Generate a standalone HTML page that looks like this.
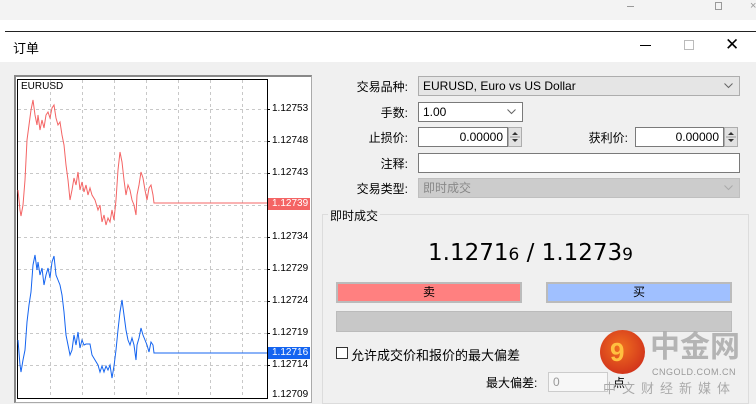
<!DOCTYPE html>
<html><head><meta charset="utf-8"><style>
*{margin:0;padding:0;box-sizing:border-box}
body{width:756px;height:403px;overflow:hidden;background:#f0f0f0;font-family:"Liberation Sans","Noto Sans CJK SC",sans-serif;font-size:12px;color:#000;position:relative}
.a{position:absolute}
.lbl{position:absolute;text-align:right;width:100px;font-size:12px}
.fld{position:absolute;background:#fff;border:1px solid #7a7a7a;height:20px;font-size:12px;padding:2px 4px;line-height:14px}
.ax{position:absolute;left:272px;font-size:10px;line-height:10px}
.spin{position:absolute;width:14px;height:20px;border:1px solid #adadad;background:#e1e1e1}
.chev{position:absolute;right:6px;top:6px}
</style></head><body>
<div class="a" style="left:0;top:0;width:756px;height:20px;background:#f3f3f3"></div>
<div class="a" style="left:627px;top:6px;width:7px;height:1px;background:#999"></div>
<div class="a" style="left:715px;top:2px;width:7px;height:8px;border:1px solid #999"></div>
<div class="a" style="left:750px;top:0px;color:#999;font-size:11px">×</div>
<div class="a" style="left:0;top:20px;width:756px;height:42px;background:#fff"></div>
<div class="a" style="left:5px;top:31px;width:751px;height:1px;background:#222"></div>
<div class="a" style="left:13px;top:38px;font-size:13px">订单</div>
<div class="a" style="left:640px;top:45px;width:11px;height:1px;background:#000"></div>
<div class="a" style="left:684px;top:40px;width:10px;height:10px;border:1px solid #bbb"></div>
<div class="a" style="left:725px;top:35px;font-size:17px;line-height:20px">✕</div>

<div class="a" style="left:14px;top:75px;width:298px;height:328px;border:1px solid #aaa;border-left:2px solid #888;border-top:2px solid #888;background:#fff"></div>
<svg class="a" style="left:0;top:0" width="320" height="403">
<g stroke="#c8c8c8" stroke-dasharray="3,3" stroke-width="1">
<line x1="50.5" y1="80" x2="50.5" y2="398"/><line x1="82.5" y1="80" x2="82.5" y2="398"/><line x1="114.5" y1="80" x2="114.5" y2="398"/><line x1="146.5" y1="80" x2="146.5" y2="398"/><line x1="178.5" y1="80" x2="178.5" y2="398"/><line x1="210.5" y1="80" x2="210.5" y2="398"/><line x1="242.5" y1="80" x2="242.5" y2="398"/>
<line x1="18" y1="109.5" x2="267" y2="109.5"/><line x1="18" y1="141.5" x2="267" y2="141.5"/><line x1="18" y1="173.5" x2="267" y2="173.5"/><line x1="18" y1="205.5" x2="267" y2="205.5"/><line x1="18" y1="237.5" x2="267" y2="237.5"/><line x1="18" y1="269.5" x2="267" y2="269.5"/><line x1="18" y1="301.5" x2="267" y2="301.5"/><line x1="18" y1="333.5" x2="267" y2="333.5"/><line x1="18" y1="365.5" x2="267" y2="365.5"/>
</g>
<rect x="17.5" y="79.5" width="250" height="319" fill="none" stroke="#000"/>
<g stroke="#000"><line x1="267" y1="109.5" x2="270" y2="109.5"/><line x1="267" y1="141.5" x2="270" y2="141.5"/><line x1="267" y1="173.5" x2="270" y2="173.5"/><line x1="267" y1="237.5" x2="270" y2="237.5"/><line x1="267" y1="269.5" x2="270" y2="269.5"/><line x1="267" y1="301.5" x2="270" y2="301.5"/><line x1="267" y1="333.5" x2="270" y2="333.5"/><line x1="267" y1="365.5" x2="270" y2="365.5"/></g>
<polyline fill="none" stroke="#f46464" stroke-width="1" points="18,190 20,210 21,216 23,205 25,180 27,140 29,125 31,110 33,100 35,115 37,125 38,115 40,130 42,120 44,128 46,115 48,112 50,118 52,108 54,105 56,118 58,125 60,122 62,135 64,145 66,165 68,180 70,200 72,190 74,178 76,185 78,172 80,190 82,182 84,192 86,185 88,195 90,188 92,195 95,200 98,210 100,205 102,222 104,215 106,225 108,218 110,222 112,210 114,220 116,200 118,170 120,152 122,162 124,180 126,195 128,185 130,190 132,200 134,205 136,215 137,195 139,185 141,172 143,178 145,190 147,200 149,188 151,185 153,195 154,203 267,203"/>
<polyline fill="none" stroke="#1464f0" stroke-width="1" points="18,340 20,365 21,372 23,360 25,350 27,322 29,305 31,292 33,265 35,255 37,270 38,262 40,275 42,268 44,285 46,275 48,268 50,278 52,262 54,256 56,275 58,280 60,285 62,295 64,312 66,335 68,345 70,355 72,350 74,335 76,345 78,332 80,348 82,340 84,345 86,344 90,344 92,355 95,360 98,365 100,372 102,366 104,372 106,366 108,370 110,365 112,378 114,366 116,350 118,330 120,312 122,300 124,315 126,330 128,340 130,345 132,338 134,345 136,360 137,345 139,338 141,328 143,335 145,340 147,345 149,352 151,342 153,345 154,353 267,353"/>
<rect x="268" y="198" width="42" height="12" fill="#f46464"/>
<rect x="268" y="347" width="42" height="12" fill="#1464f0"/>
</svg>
<div class="a" style="left:21px;top:81px;font-size:10px">EURUSD</div>
<div class="ax" style="top:104px">1.12753</div>
<div class="ax" style="top:136px">1.12748</div>
<div class="ax" style="top:168px">1.12743</div>
<div class="ax" style="top:199px;color:#fff">1.12739</div>
<div class="ax" style="top:232px">1.12734</div>
<div class="ax" style="top:264px">1.12729</div>
<div class="ax" style="top:296px">1.12724</div>
<div class="ax" style="top:328px">1.12719</div>
<div class="ax" style="top:348px;color:#fff">1.12716</div>
<div class="ax" style="top:360px">1.12714</div>
<div class="ax" style="top:390px">1.12709</div>

<div class="lbl" style="left:308px;top:78px">交易品种:</div>
<div class="fld" style="left:418px;top:76px;width:322px;background:#e5e5e5;border-color:#adadad">EURUSD, Euro vs US Dollar<svg class="chev" width="9" height="6"><polyline points="0.5,0.5 4.5,4.5 8.5,0.5" fill="none" stroke="#666"/></svg></div>
<div class="lbl" style="left:308px;top:104px">手数:</div>
<div class="fld" style="left:418px;top:102px;width:105px">1.00<svg class="chev" width="9" height="6"><polyline points="0.5,0.5 4.5,4.5 8.5,0.5" fill="none" stroke="#666"/></svg></div>
<div class="lbl" style="left:308px;top:129px">止损价:</div>
<div class="fld" style="left:418px;top:127px;width:90px;text-align:right">0.00000</div>
<div class="spin" style="left:508px;top:127px"><svg width="12" height="18"><path d="M3,7 L6,4 L9,7Z M3,11 L6,14 L9,11Z" fill="#333"/><line x1="1" y1="9" x2="11" y2="9" stroke="#999"/></svg></div>
<div class="lbl" style="left:528px;top:129px">获利价:</div>
<div class="fld" style="left:635px;top:127px;width:89px;text-align:right">0.00000</div>
<div class="spin" style="left:724px;top:127px"><svg width="12" height="18"><path d="M3,7 L6,4 L9,7Z M3,11 L6,14 L9,11Z" fill="#333"/><line x1="1" y1="9" x2="11" y2="9" stroke="#999"/></svg></div>
<div class="lbl" style="left:308px;top:155px">注释:</div>
<div class="fld" style="left:418px;top:153px;width:322px"></div>
<div class="lbl" style="left:308px;top:180px">交易类型:</div>
<div class="fld" style="left:418px;top:178px;width:322px;background:#ccc;border-color:#bfbfbf;color:#888">即时成交<svg class="chev" width="9" height="6"><polyline points="0.5,0.5 4.5,4.5 8.5,0.5" fill="none" stroke="#aaa"/></svg></div>

<div class="a" style="left:322px;top:214px;width:427px;height:190px;border:1px solid #dcdcdc"></div>
<div class="a" style="left:328px;top:207px;background:#f0f0f0;padding:0 2px;font-size:12px">即时成交</div>
<div class="a" style="left:428px;top:240px;font-size:23px;font-family:'DejaVu Sans',sans-serif">1.1271<span style="font-size:17px">6</span> / 1.1273<span style="font-size:17px">9</span></div>
<div class="a" style="left:336px;top:282px;width:186px;height:21px;background:#ff8080;border:2px solid #bbb;text-align:center;line-height:16px">卖</div>
<div class="a" style="left:546px;top:282px;width:186px;height:21px;background:#a0c0ff;border:2px solid #bbb;text-align:center;line-height:16px">买</div>
<div class="a" style="left:336px;top:311px;width:396px;height:21px;background:#c8c8c8;border:1px solid #bbb"></div>
<div class="a" style="left:336px;top:347px;width:12px;height:12px;border:1px solid #333;background:#fff"></div>
<div class="a" style="left:351px;top:345px;font-size:13px">允许成交价和报价的最大偏差</div>
<div class="a" style="left:486px;top:374px;font-size:12px">最大偏差:</div>
<div class="a" style="left:548px;top:372px;width:60px;height:20px;border:1px solid #ccc;background:#f7f7f7;color:#999;padding:2px 4px">0</div>
<div class="a" style="left:613px;top:374px">点</div>

<div class="a" style="left:600px;top:330px;width:45px;height:44px;border-radius:50%;background:radial-gradient(circle at 45% 40%,#f07020,#c8201a)"></div>
<div class="a" style="left:610px;top:338px;font-size:26px;line-height:28px;color:#ffc040;font-weight:bold">9</div>
<div class="a" style="left:650px;top:330px;font-size:30px;line-height:36px;color:#aaa;font-weight:bold;opacity:.85">中金网</div>
<div class="a" style="left:652px;top:367px;font-size:9px;color:#999;letter-spacing:0.5px">CNGOLD.COM.CN</div>
<div class="a" style="left:603px;top:378px;font-size:13px;color:#aaa;letter-spacing:6px">中文财经新媒体</div>
</body></html>
